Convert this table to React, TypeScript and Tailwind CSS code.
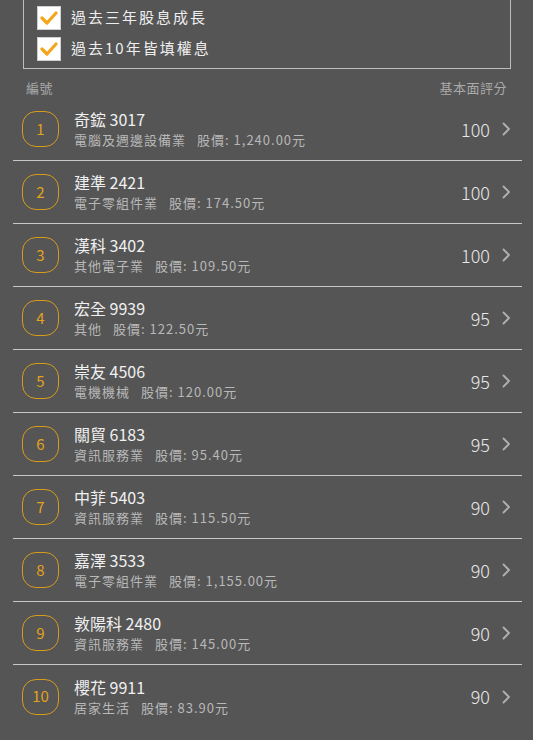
const stocks = [
  { name: "奇鋐", code: "3017", cat: "電腦及週邊設備業", price: "1,240.00", score: 100 },
  { name: "建準", code: "2421", cat: "電子零組件業", price: "174.50", score: 100 },
  { name: "漢科", code: "3402", cat: "其他電子業", price: "109.50", score: 100 },
  { name: "宏全", code: "9939", cat: "其他", price: "122.50", score: 95 },
  { name: "崇友", code: "4506", cat: "電機機械", price: "120.00", score: 95 },
  { name: "關貿", code: "6183", cat: "資訊服務業", price: "95.40", score: 95 },
  { name: "中菲", code: "5403", cat: "資訊服務業", price: "115.50", score: 90 },
  { name: "嘉澤", code: "3533", cat: "電子零組件業", price: "1,155.00", score: 90 },
  { name: "敦陽科", code: "2480", cat: "資訊服務業", price: "145.00", score: 90 },
  { name: "櫻花", code: "9911", cat: "居家生活", price: "83.90", score: 90 },
];

function Check({ label }: { label: string }) {
  return (
    <div className="flex items-center gap-[10px] h-[31px]">
      <div className="w-[24px] h-[24px] bg-white border border-[#cfcfcf] flex items-center justify-center">
        <svg width="18" height="14" viewBox="0 0 18 14">
          <path d="M2 7 L7 12 L16 2" fill="none" stroke="#f5a51c" strokeWidth="3.2" strokeLinecap="round" strokeLinejoin="round" />
        </svg>
      </div>
      <span className="text-[15px] text-[#eeeeee] tracking-[2px]">{label}</span>
    </div>
  );
}

export default function App() {
  return (
    <div
      className="w-[533px] h-[740px] bg-[#555555] overflow-hidden"
      style={{ fontFamily: '"Noto Sans CJK TC", "Noto Sans", sans-serif' }}
    >
      {/* filter box */}
      <div className="ml-[23px] mr-[22px] border-x border-b border-[#bdbdbd] pl-[13px] pt-[2px] pb-[4px]">
        <Check label="過去三年股息成長" />
        <Check label="過去10年皆填權息" />
      </div>

      {/* list header */}
      <div className="flex justify-between ml-[26px] mr-[26px] mt-[9px] h-[20px] items-center text-[13px] text-[#aaaaaa] tracking-[0.5px]">
        <span>編號</span>
        <span>基本面評分</span>
      </div>

      <div className="ml-[13px] mr-[11px]">
        {stocks.map((s, i) => (
          <div
            key={s.code}
            className={`flex items-center h-[63px] pl-[9px] pr-[11px] ${i < stocks.length - 1 ? "border-b border-[#c8c8c8]" : ""}`}
          >
            <div className="w-[37px] h-[36px] rounded-[14px] border-[1.5px] border-[#d89c1c] flex items-center justify-center text-[15px] text-[#e3a21e]">
              {i + 1}
            </div>
            <div className="flex-1 ml-[15px] flex flex-col">
              <div className="text-[16px] leading-[21px] text-[#f0f0f0]">
                {s.name} {s.code}
              </div>
              <div className="text-[13px] leading-[19px] text-[#b8b8b8] tracking-[1px]">
                {s.cat}
                <span className="ml-[11px]">股價: {s.price}元</span>
              </div>
            </div>
            <span className="text-[18px] text-[#e8e8e8] font-light">{s.score}</span>
            <svg width="9" height="14" viewBox="0 0 9 14" className="ml-[12px]">
              <path d="M1.5 1.5 L7 7 L1.5 12.5" fill="none" stroke="#b0b0b0" strokeWidth="1.8" strokeLinecap="round" strokeLinejoin="round" />
            </svg>
          </div>
        ))}
      </div>
    </div>
  );
}
